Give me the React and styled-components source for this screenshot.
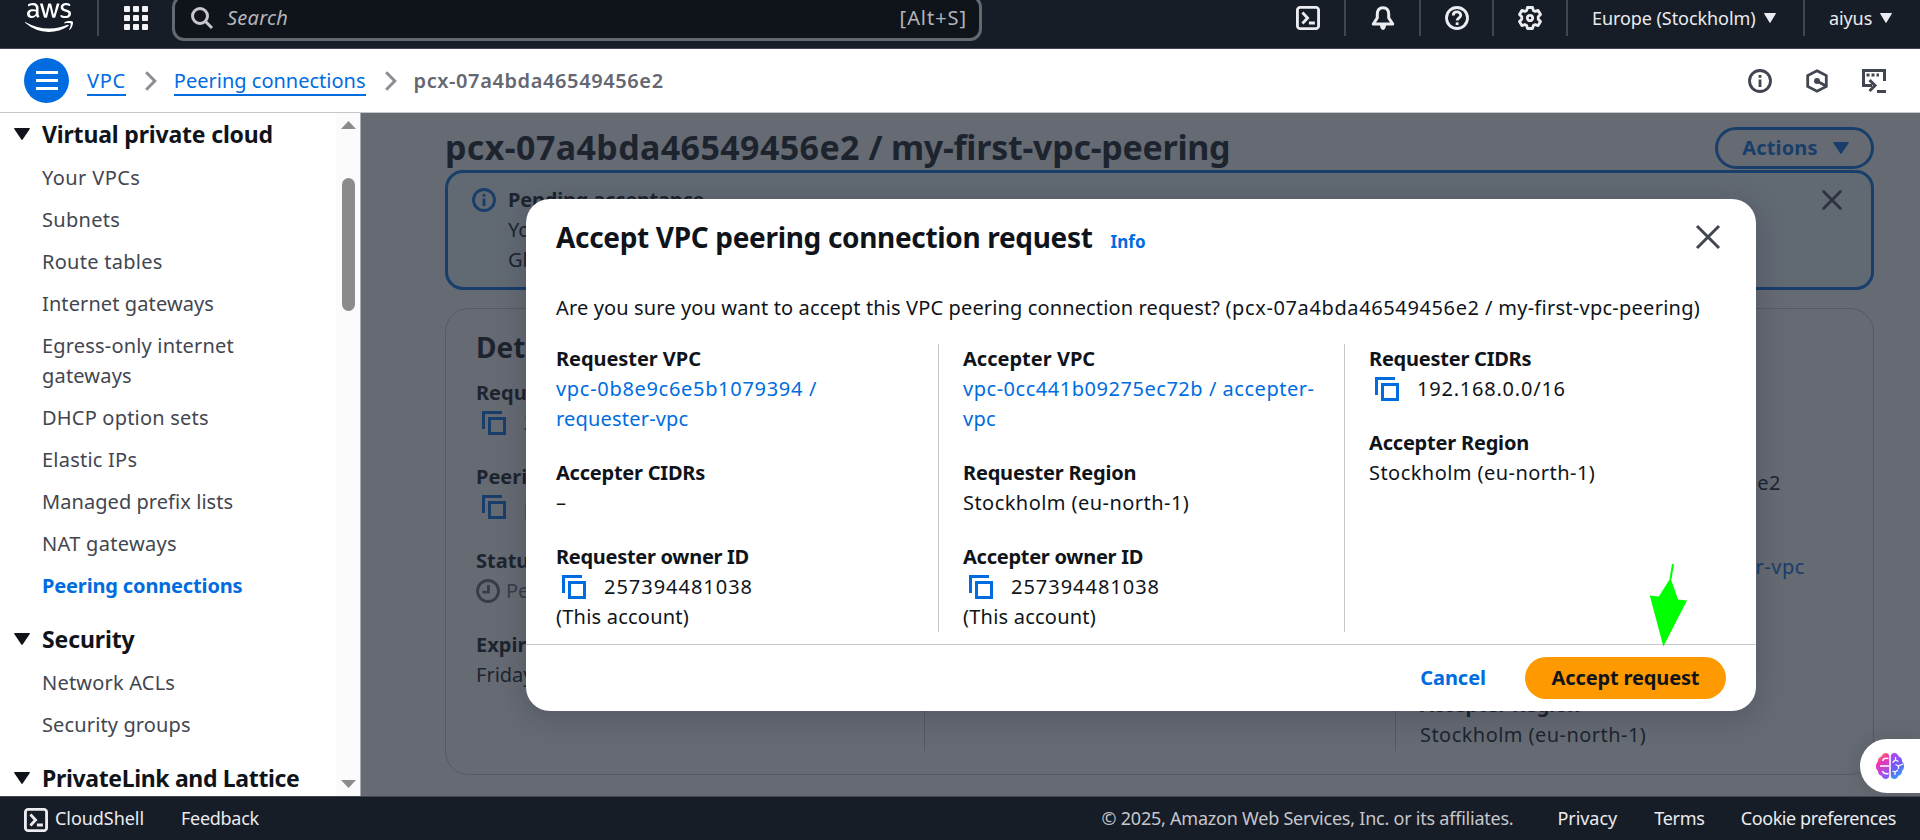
import React from 'react';
import styled, { createGlobalStyle, css } from 'styled-components';
import { FaAws } from 'react-icons/fa';

const Global = createGlobalStyle`
  * { box-sizing: border-box; }
  body { margin: 0; background: #fff; }
`;

const tracking = css`letter-spacing: ${p => p.$ls || 0}px; white-space: nowrap;`;

const Page = styled.div`
  width: 1920px; height: 840px; overflow: hidden;
  display: flex; flex-direction: column;
  font: 400 20px/30px "Noto Sans", "Open Sans", sans-serif; color: #0f141a;
`;

/* ---------- top navigation ---------- */
const TopNav = styled.header`
  height: 49px; flex: none; display: flex; align-items: flex-start;
  background: #161d26; border-bottom: 1px solid #424650; color: #ebebf0;
`;
const Cell = styled.div`
  height: 36px; width: ${p => p.$w}px; flex: none;
  display: flex; align-items: center; justify-content: ${p => p.$start ? 'flex-start' : 'center'};
  padding-left: ${p => p.$start || 0}px; gap: 8px;
  border-left: ${p => p.$line ? '2px solid #424650' : '0'};
`;
const AwsLogo = styled(FaAws)`width: 48px; height: 39px; color: #fff; margin-top: -1px;`;
const SearchBox = styled.div`
  width: 810px; height: 46px; margin-top: -5px; flex: none;
  display: flex; align-items: center; padding: 0 12px 0 16px;
  background: #0f141a; border: 3px solid #656871; border-radius: 12px; color: #b4b4bb;
`;
const Placeholder = styled.span`font-style: italic; flex: 1; margin-left: 14px; ${tracking}`;
const Shortcut = styled.span`color: #b4b4bb; ${tracking}`;
const Spacer = styled.div`flex: 1;`;
const NavText = styled.span`font-size: 18px; ${tracking}`;
const Svg = styled.svg`display: block; flex: none; overflow: visible;`;

/* ---------- breadcrumbs ---------- */
const CrumbBar = styled.div`
  height: 64px; flex: none; display: flex; align-items: center; background: #fff;
  padding: 0 34px 0 24px; border-bottom: 1px solid #c6c6cd;
`;
const MenuButton = styled.button`
  width: 45px; height: 45px; padding: 0; margin: 0 18px 0 0; border: 0; border-radius: 50%;
  background: #006ce0; display: flex; align-items: center; justify-content: center;
`;
const CrumbLink = styled.a`
  color: #006ce0; height: 30px; border-bottom: 2px solid #006ce0; ${tracking}
`;
const CrumbCurrent = styled.span`color: #656871; font-weight: 600; ${tracking}`;
const Chevron = styled.svg`display: block; flex: none; margin: 0 17px 0 19px;`;
const CrumbTools = styled.div`display: flex; gap: 33px; margin-left: auto; align-items: center;`;

/* ---------- side navigation ---------- */
const Body = styled.div`flex: 1; min-height: 0; display: flex;`;
const Side = styled.nav`
  width: 361px; flex: none; display: flex; overflow: hidden; background: #fff; border-right: 1px solid #a9abb2;
`;
const SideScroll = styled.div`flex: 1; padding-top: 6px; height: 683px; overflow: hidden;`;
const Group = styled.section`margin-bottom: 23px;`;
const GroupTitle = styled.h3`
  margin: 0 0 14px; height: 30px; display: flex; align-items: center; padding-left: 14px; gap: 12px;
  font-size: 23px; font-weight: 700; ${tracking}
`;
const SideLink = styled.a`
  display: block; margin: 0 0 12px 42px; white-space: pre-line;
  color: ${p => p.$active ? '#006ce0' : '#424650'}; font-weight: ${p => p.$active ? 700 : 400};
  letter-spacing: ${p => p.$ls}px;
`;
const Track = styled.div`
  width: 24px; background: #fbfbfb; display: flex; flex-direction: column; align-items: center;
  padding: 8px 0 8px 1px;
`;
const Thumb = styled.div`width: 13px; height: 133px; border-radius: 7px; background: #8b8b8b; margin: 49px 0 auto;`;

/* ---------- page content ---------- */
const Main = styled.main`flex: 1; position: relative; overflow: hidden; padding: 14px 46px 0 84px; background: #fff;`;
const TitleRow = styled.div`display: flex; justify-content: space-between; height: 43px;`;
const PageTitle = styled.h1`margin: -2px 0 0; font-size: 34px; line-height: 44px; font-weight: 700; ${tracking}`;
const Tracked = styled.span`${tracking}`;
const ActionsButton = styled.button`
  width: 159px; height: 42px; padding: 0 0 0 2px; border: 3px solid #006ce0; border-radius: 21px; background: #fff;
  color: #006ce0; font: 700 20px/30px "Noto Sans", sans-serif; display: flex; align-items: center; justify-content: center;
  gap: 15px; ${tracking}
`;
const Alert = styled.div`
  height: 120px; border: 3px solid #006ce0; border-radius: 18px; background: #f0fbff;
  padding: 11px 29px 0 24px; display: flex;
`;
const AlertBody = styled.div`flex: 1; margin: 1px 0 0 12px;`;
const AlertTitle = styled.div`font-weight: 700; ${tracking}`;
const AlertIcon = styled.div`flex: none; padding-top: ${p => p.$top}px;`;
const DetailsPanel = styled.section`
  margin-top: 18px; height: 467px; border: 1px solid #c6c6cd; border-radius: 24px; padding: 18px 0 0 30px;
`;
const PanelTitle = styled.h2`margin: 0 0 11px; font-size: 28px; line-height: 40px; font-weight: 700;`;
const DetailGrid = styled.div`display: grid; grid-template-columns: 448px 471px 1fr; height: 373px;`;
const DetailCol = styled.div`
  border-left: ${p => p.$line ? '1px solid #c6c6cd' : '0'}; padding-left: ${p => p.$line ? 24 : 0}px;
  display: flex; flex-direction: column; gap: 24px;
`;
const Blank = styled.div`height: ${p => p.$h}px;`;

/* ---------- label/value pair ---------- */
const Label = styled.div`font-weight: 700; ${tracking}`;
const Value = styled.div`
  display: flex; height: 30px; color: ${p => p.$link ? '#006ce0' : p.$muted ? '#656871' : 'inherit'};
  padding-left: ${p => p.$copy ? 6 : 0}px; gap: ${p => p.$copy ? 18 : 6}px; align-items: center; ${tracking}
`;

/* ---------- dialog ---------- */
const Backdrop = styled.div`
  position: absolute; inset: 0; background: rgba(35, 43, 55, 0.7);
  display: flex; align-items: center; justify-content: center;
`;
const Dialog = styled.div`
  width: 1230px; height: 512px; margin-left: 1px; margin-top: 1px; background: #fff; border-radius: 24px;
  box-shadow: 0 6px 30px 2px rgba(0, 7, 22, 0.16); display: flex; flex-direction: column;
`;
const DialogHead = styled.div`display: flex; align-items: baseline; padding: 18px 36px 0 30px; height: 94px;`;
const DialogTitle = styled.h2`margin: 0; font-size: 28px; line-height: 40px; font-weight: 700; ${tracking}`;
const InfoLink = styled.a`margin-left: 18px; color: #006ce0; font-size: 17px; font-weight: 700; ${tracking}`;
const CloseButton = styled.button`margin: 8px 0 0 auto; padding: 0; border: 0; background: none; align-self: flex-start;`;
const Question = styled.p`margin: 0 0 21px 30px; height: 30px; ${tracking}`;
const DialogGrid = styled.div`display: grid; grid-template-columns: 382px 406px 1fr; margin-left: 30px; height: 288px;`;
const DialogFoot = styled.div`
  margin-top: auto; height: 67px; border-top: 1px solid #c6c6cd; display: flex; align-items: center;
  justify-content: flex-end; padding-right: 30px; gap: 39px;
`;
const LinkButton = styled.button`
  border: 0; padding: 0; background: none; color: #006ce0; font: 700 20px/30px "Noto Sans", sans-serif; ${tracking}
`;
const PrimaryButton = styled.button`
  width: 201px; height: 42px; border: 0; padding: 0; border-radius: 21px; background: #ff9900; color: #0f141a;
  font: 700 20px/30px "Noto Sans", sans-serif; ${tracking}
`;
const Arrow = styled.svg`position: absolute; left: 1288px; top: 451px;`;
const Assistant = styled.div`
  position: absolute; right: 0; top: 626px; width: 60px; height: 54px; border-radius: 27px 0 0 27px; background: #fff;
  display: flex; align-items: center; padding-left: 16px; box-shadow: 0 0 24px rgba(0, 0, 0, 0.12);
`;

/* ---------- footer ---------- */
const Footer = styled.footer`
  height: 44px; flex: none; background: #161d26; border-top: 1px solid #424650; color: #ebebf0;
  display: flex; align-items: center; padding: 2px 24px 0 24px; font-size: 18px;
`;
const FootText = styled.span`
  margin-left: ${p => p.$ml}px; color: ${p => p.$dim ? '#c6c6cd' : '#ebebf0'}; line-height: 28px;
  margin-top: -3px; ${tracking}
`;

/* ---------- icons ---------- */
const Tri = ({ w = 12, h = 10 }) => (
  <Svg width={w} height={h} viewBox="0 0 12 10" preserveAspectRatio="none" fill="currentColor">
    <path d="M.6 0h10.8a.5.5 0 0 1 .4.8L6.5 9.6a.6.6 0 0 1-1 0L.2.8A.5.5 0 0 1 .6 0z" />
  </Svg>
);
const Icon16 = ({ size = 24, color = 'currentColor', sw = 2, children }) => (
  <Svg width={size} height={size} viewBox="0 0 16 16" fill="none" stroke={color} strokeWidth={sw}>{children}</Svg>
);
const Terminal = () => (
  <Icon16 sw={1.9}><rect x=".95" y=".95" width="14.1" height="14.1" rx="1.8" /><path d="M4.3 4.4 7.7 8l-3.4 3.6M8.6 11.3h4" /></Icon16>
);
const AppsGrid = () => (
  <Svg width="24" height="24" viewBox="0 0 24 24" fill="#f3f3f7">
    {[0, 9, 18].map(y => [0, 9, 18].map(x => <rect key={`${x}-${y}`} x={x} y={y} width="6" height="6" rx="1" />))}
  </Svg>
);
const SearchIcon = () => (
  <Svg width="22" height="22" viewBox="0 0 22 22" fill="none" stroke="#c6c6cd" strokeWidth="3">
    <circle cx="9" cy="9" r="7.5" /><path d="m14 14 7 7" />
  </Svg>
);
const Bell = () => (
  <Icon16 sw={2}>
    <path strokeLinejoin="round" d="M8 1.1c-2.6 0-3.8 1.9-3.8 4.2v2.600L1.5 12h13l-2.7-4.1V5.300C11.8 3 10.6 1.100 8 1.100z" />
    <path d="M6 12.500c0 2 .8 3.500 2 3.500s2-1.500 2-3.500z" fill="currentColor" stroke="none" />
  </Icon16>
);
const Help = () => (
  <Icon16 sw={1.9}><circle cx="8" cy="8" r="7" /><path d="M5.500 6.300c0-1.500 1.100-2.400 2.500-2.400s2.500.9 2.500 2.200c0 1.700-2.400 1.800-2.400 3.600" /><path d="M8.100 10.900v1.800" /></Icon16>
);
const Gear = () => (
  <Icon16 sw={1.9}>
    <path strokeLinejoin="round" d="M6.300 1h3.400l.5 2 1.200.6 2-.7 1.600 2.800-1.500 1.500v1.600l1.500 1.500-1.600 2.800-2-.7-1.200.6-.5 2H6.300l-.5-2-1.200-.6-2 .7L1 10.300l1.500-1.500V7.200L1 5.700l1.600-2.800 2 .7L5.800 3z" />
    <circle cx="8" cy="8" r="1.8" />
  </Icon16>
);
const InfoIcon = ({ color }) => (
  <Icon16 color={color} sw={1.9}><circle cx="8" cy="8" r="7" /><path d="M8 7v5M8 4v1.8" /></Icon16>
);
const Hexagon = () => (
  <Svg width="24" height="24" viewBox="0 0 24 24" fill="none" stroke="#424650" strokeWidth="2.8">
    <path d="M12 1.800 21.300 6.600v10.800L12 22.200 2.700 17.400V6.600z" />
    <circle cx="12" cy="12" r="3" fill="#424650" stroke="none" /><path d="m12 12 9 5" strokeWidth="3" />
  </Svg>
);
const ShellPanel = () => (
  <Svg width="24" height="24" viewBox="0 0 24 24" fill="none" stroke="#424650" strokeWidth="3">
    <path d="M10 16.500H1.500V1.500h21V12" /><path d="m7.500 11 5.500 5.500-5.500 5.500" /><path d="M15 22.500h9" />
    <path d="M4.500 6h12.500" strokeDasharray="3 2" />
  </Svg>
);
const CopyIcon = () => (
  <Svg width="24" height="24" viewBox="0 0 24 24" fill="none" stroke="#006ce0" strokeWidth="3">
    <path d="M1.500 18V1.500H20" /><rect x="7.500" y="7.500" width="15" height="15" />
  </Svg>
);
const Clock = () => (
  <Icon16 color="#656871" sw={1.9}><circle cx="8" cy="8" r="7" /><path d="M8.300 4v4.700H4.200" /></Icon16>
);
const Cross = ({ size }) => (
  <Svg width={size} height={size} viewBox="0 0 24 24" fill="none" stroke="#424650" strokeWidth={size > 22 ? 3 : 3.4}>
    <path d="m1 1 22 22M23 1 1 23" />
  </Svg>
);
const CrumbChevron = () => (
  <Chevron width="12" height="20" viewBox="0 0 12 20" fill="none" stroke="#8c8c94" strokeWidth="3"><path d="m1.200 1.200 8.600 8.800-8.600 8.800" /></Chevron>
);
const Brain = () => (
  <Svg width="28" height="26" viewBox="0 0 28 26">
    <defs>
      <linearGradient id="brainL" x1=".2" y1="0" x2=".6" y2="1"><stop offset="0" stopColor="#ff9a2e" /><stop offset=".35" stopColor="#f032b4" /><stop offset="1" stopColor="#8a5cf6" /></linearGradient>
      <linearGradient id="brainR" x1=".3" y1="0" x2=".7" y2="1"><stop offset="0" stopColor="#b044f0" /><stop offset=".5" stopColor="#6b5cf6" /><stop offset="1" stopColor="#2fa8ff" /></linearGradient>
    </defs>
    <path fill="url(#brainL)" d="M13.200 3v20c-.3 2-1.700 3-3.500 3-2.200 0-3.600-1.400-4-3.200C3.200 22.300 1.800 20.600 2 18 .6 16.800 0 15.100 0 13.200S.7 9.500 2 8.500C1.800 5.800 3.200 4 5.500 3.300 6.200 1.200 7.700 0 9.700 0c1.800 0 3.200 1 3.500 3z" />
    <path fill="url(#brainR)" d="M14.800 3v20c.3 2 1.700 3 3.500 3 2.200 0 3.600-1.400 4-3.200 2.500-.5 3.900-2.200 3.700-4.800 1.400-1.200 2-2.900 2-4.800s-.7-3.700-2-4.700c.2-2.700-1.200-4.500-3.500-5.200C21.800 1.200 20.300 0 18.300 0c-1.800 0-3.200 1-3.500 3z" />
    <path fill="none" stroke="#fff" strokeWidth="1.3" d="M12.500 5.500c-3-.6-5.500.3-6 2.500M4 13h9M6.500 18c.8 2.300 3 3.200 6 2.500M19.500 4v3l-3 2.500M19.500 7l3 1.500M27 11l-4.500 2v3M22.500 13l-3-1.500M16.500 18l2.500 1v3M19 19l3-2" />
  </Svg>
);

/* ---------- data ---------- */
const groups = [
  { title: 'Virtual private cloud', ls: -0.17, items: [
    ['Your VPCs', 0.41], ['Subnets', 0.3], ['Route tables', 0.27], ['Internet gateways', 0.1],
    ['Egress-only internet\ngateways', 0.18], ['DHCP option sets', 0.2], ['Elastic IPs', 0.23],
    ['Managed prefix lists', 0.06], ['NAT gateways', 0.3], ['Peering connections', -0.15, true],
  ] },
  { title: 'Security', ls: -0.11, items: [['Network ACLs', 0.2], ['Security groups', 0.13]] },
  { title: 'PrivateLink and Lattice', ls: -0.34, items: [] },
];

const Field = ({ label, ls, children }) => <div><Label $ls={ls}>{label}</Label>{children}</div>;
const CopyValue = ({ ls, children }) => <Value $copy $ls={ls}><CopyIcon />{children}</Value>;

function Header() {
  return (
    <TopNav>
      <Cell $w={97}><AwsLogo /></Cell>
      <Cell $w={75} $line><AppsGrid /></Cell>
      <SearchBox><SearchIcon /><Placeholder $ls={0.25}>Search</Placeholder><Shortcut $ls={0.95}>[Alt+S]</Shortcut></SearchBox>
      <Spacer />
      <Cell $w={73}><Terminal /></Cell>
      <Cell $w={75} $line><Bell /></Cell>
      <Cell $w={73} $line><Help /></Cell>
      <Cell $w={74} $line><Gear /></Cell>
      <Cell $w={237} $line $start={24}><NavText $ls={-0.07}>Europe (Stockholm)</NavText><Tri /></Cell>
      <Cell $w={117} $line $start={24}><NavText $ls={-0.1}>aiyus</NavText><Tri /></Cell>
    </TopNav>
  );
}

function Breadcrumbs() {
  return (
    <CrumbBar>
      <MenuButton>
        <Svg width="22" height="19" viewBox="0 0 22 19" stroke="#fff" strokeWidth="3"><path d="M0 1.500h22M0 9.500h22M0 17.500h22" /></Svg>
      </MenuButton>
      <CrumbLink $ls={0.7}>VPC</CrumbLink>
      <CrumbChevron />
      <CrumbLink $ls={0}>Peering connections</CrumbLink>
      <CrumbChevron />
      <CrumbCurrent $ls={0.6}>pcx-07a4bda46549456e2</CrumbCurrent>
      <CrumbTools><InfoIcon color="#424650" /><Hexagon /><ShellPanel /></CrumbTools>
    </CrumbBar>
  );
}

function SideNav() {
  return (
    <Side>
      <SideScroll>
        {groups.map(g => (
          <Group key={g.title}>
            <GroupTitle $ls={g.ls}><Tri w={16} h={12} />{g.title}</GroupTitle>
            {g.items.map(([name, ls, active]) => <SideLink key={name} $ls={ls} $active={active}>{name}</SideLink>)}
          </Group>
        ))}
      </SideScroll>
      <Track>
        <Svg width="15" height="8" viewBox="0 0 15 8" fill="#8b8b8b"><path d="M7.500 0 15 8H0z" /></Svg>
        <Thumb />
        <Svg width="15" height="8" viewBox="0 0 15 8" fill="#8b8b8b"><path d="M7.500 8 15 0H0z" /></Svg>
      </Track>
    </Side>
  );
}

function AcceptDialog() {
  return (
    <Dialog>
      <DialogHead>
        <DialogTitle $ls={-0.33}>Accept VPC peering connection request</DialogTitle>
        <InfoLink $ls={0.1}>Info</InfoLink>
        <CloseButton><Cross size={24} /></CloseButton>
      </DialogHead>
      <Question $ls={0.13}>
        Are you sure you want to accept this VPC peering connection request? <Tracked $ls={0.62}>(pcx-07a4bda46549456e2</Tracked>
        <Tracked $ls={0.26}> / my-first-vpc-peering)</Tracked>
      </Question>
      <DialogGrid>
        <DetailCol>
          <Field label="Requester VPC" ls={-0.06}>
            <Value $link $ls={0.69}>vpc-0b8e9c6e5b1079394 /</Value><Value $link $ls={0.19}>requester-vpc</Value>
          </Field>
          <Field label="Accepter CIDRs" ls={-0.23}><Value>–</Value></Field>
          <Field label="Requester owner ID" ls={-0.29}>
            <CopyValue ls={0.98}>257394481038</CopyValue><Value $ls={0.22}>(This account)</Value>
          </Field>
        </DetailCol>
        <DetailCol $line>
          <Field label="Accepter VPC" ls={0.01}>
            <Value $link $ls={0.53}>vpc-0cc441b09275ec72b / accepter-</Value><Value $link $ls={0.3}>vpc</Value>
          </Field>
          <Field label="Requester Region" ls={-0.2}><Value $ls={0.45}>Stockholm (eu-north-1)</Value></Field>
          <Field label="Accepter owner ID" ls={-0.26}>
            <CopyValue ls={0.98}>257394481038</CopyValue><Value $ls={0.22}>(This account)</Value>
          </Field>
        </DetailCol>
        <DetailCol $line>
          <Field label="Requester CIDRs" ls={-0.24}><CopyValue ls={0.78}>192.168.0.0/16</CopyValue></Field>
          <Field label="Accepter Region" ls={-0.2}><Value $ls={0.45}>Stockholm (eu-north-1)</Value></Field>
        </DetailCol>
      </DialogGrid>
      <DialogFoot>
        <LinkButton $ls={-0.03}>Cancel</LinkButton>
        <PrimaryButton $ls={-0.14}>Accept request</PrimaryButton>
      </DialogFoot>
    </Dialog>
  );
}

function Content() {
  return (
    <Main>
      <TitleRow>
        <PageTitle $ls={-0.28}><Tracked $ls={0.38}>pcx-07a4bda46549456e2</Tracked> / my-first-vpc-peering</PageTitle>
        <ActionsButton $ls={0.15}>Actions<Tri w={16} h={12} /></ActionsButton>
      </TitleRow>
      <Alert>
        <AlertIcon $top={4}><InfoIcon color="#006ce0" /></AlertIcon>
        <AlertBody><AlertTitle $ls={-0.2}>Pending acceptance</AlertTitle><div>You</div><div>Gl</div></AlertBody>
        <AlertIcon $top={6}><Cross size={20} /></AlertIcon>
      </Alert>
      <DetailsPanel>
        <PanelTitle>Details</PanelTitle>
        <DetailGrid>
          <DetailCol>
            <Field label="Requester"><CopyValue>2</CopyValue></Field>
            <Field label="Peering"><CopyValue>p</CopyValue></Field>
            <Field label="Status"><Value $muted><Clock />Pending</Value></Field>
            <Field label="Expiration"><Value>Friday</Value></Field>
          </DetailCol>
          <DetailCol $line />
          <DetailCol $line>
            <div><Blank $h={90} /><Value $ls={0.46}>connection/pcx-07a4bda46549456e2</Value></div>
            <div><Blank $h={30} /><Value $link $ls={0.52}>vpc-0cc441b09275ec72b / accepter-vpc</Value></div>
            <Blank $h={60} />
            <Field label="Accepter Region" ls={-0.2}><Value $ls={0.45}>Stockholm (eu-north-1)</Value></Field>
          </DetailCol>
        </DetailGrid>
      </DetailsPanel>
      <Backdrop><AcceptDialog /></Backdrop>
      <Arrow width="40" height="84" viewBox="0 0 40 84" fill="#00ff00">
        <path d="m24 0-2.500 15" stroke="#00ff00" strokeWidth="2" />
        <path d="m21.500 14 7.500 21.500 9 1L14.300 82.500.800 31.500l9 1z" />
      </Arrow>
      <Assistant><Brain /></Assistant>
    </Main>
  );
}

export default function App() {
  return (
    <Page>
      <Global />
      <Header />
      <Breadcrumbs />
      <Body><SideNav /><Content /></Body>
      <Footer>
        <Terminal />
        <FootText $ml={7} $ls={-0.05}>CloudShell</FootText>
        <FootText $ml={37} $ls={-0.3}>Feedback</FootText>
        <Spacer />
        <FootText $dim $ls={-0.23}>© 2025, Amazon Web Services, Inc. or its affiliates.</FootText>
        <FootText $ml={44} $ls={-0.05}>Privacy</FootText>
        <FootText $ml={37} $ls={-0.24}>Terms</FootText>
        <FootText $ml={36} $ls={-0.41}>Cookie preferences</FootText>
      </Footer>
    </Page>
  );
}
